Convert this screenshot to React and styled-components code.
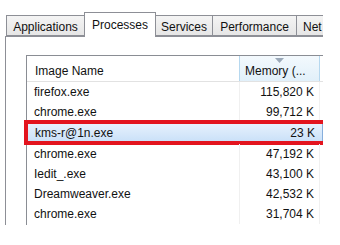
import React from 'react';
import styled, { createGlobalStyle } from 'styled-components';

const GlobalStyle = createGlobalStyle`
  body {
    margin: 0;
    background: #fff;
    font-family: "Liberation Sans", Arial, sans-serif;
    font-size: 12px;
    color: #111;
  }
`;

const Screen = styled.div`
  position: relative;
  width: 340px;
  height: 245px;
  overflow: hidden;
  background: #fff;
`;

const Clip = styled.div`
  width: 323px;
  height: 225px;
  overflow: hidden;
`;

const TabStrip = styled.div`
  display: flex;
  align-items: flex-end;
  height: 36px;
  padding-left: 7px;
  box-sizing: border-box;
`;

const Tab = styled.div`
  flex: none;
  display: flex;
  align-items: center;
  justify-content: ${(p) => (p.$cut ? 'flex-start' : 'center')};
  padding-left: ${(p) => (p.$cut ? 6 : 0)}px;
  box-sizing: border-box;
  width: ${(p) => p.$w}px;
  height: ${(p) => (p.$active ? 25 : 21)}px;
  margin-bottom: ${(p) => (p.$active ? -1 : 0)}px;
  border: 1px solid #8d8f96;
  border-bottom: ${(p) => (p.$active ? 'none' : '1px solid #8d8f96')};
  margin-left: -1px;
  background: ${(p) =>
    p.$active ? '#fff' : 'linear-gradient(#f4f4f4, #e6e6e6)'};
  padding-top: ${(p) => (p.$active ? 0 : 2)}px;
  white-space: nowrap;
  position: relative;
  z-index: ${(p) => (p.$active ? 2 : 1)};
`;

const Panel = styled.div`
  margin-left: 5px;
  border-left: 1px solid #8d8f96;
  border-top: 1px solid #8d8f96;
  height: 200px;
  padding: 18px 0 0 20px;
  box-sizing: border-box;
  background: #fff;
`;

const List = styled.div`
  border-left: 1px solid #8a8d94;
  border-top: 1px solid #8a8d94;
  height: 200px;
`;

const Header = styled.div`
  display: grid;
  grid-template-columns: 212px 81px 1fr;
  height: 25px;
  border-bottom: 1px solid #e2e2e2;
`;

const HeadCell = styled.div`
  position: relative;
  display: flex;
  align-items: center;
  padding: 4px 8px 0;
  box-sizing: border-box;
  ${(p) =>
    p.$sorted &&
    `
    background: linear-gradient(#f3f9fd, #e1f0fa);
    border-left: 1px solid #b6d8ef;
    border-right: 1px solid #b6d8ef;
    padding-left: 5px;
  `}
`;

const SortArrow = styled.svg`
  position: absolute;
  top: 2px;
  left: 35px;
`;

const Row = styled.div`
  position: relative;
  display: grid;
  grid-template-columns: 212px 81px 1fr;
  height: 20px;
  align-items: center;
  box-sizing: border-box;
  ${(p) =>
    p.$selected &&
    `
    height: 21px;
    margin-bottom: 1px;
    background: linear-gradient(#e8f2fd, #c9e0f8);
    border: 1px solid #86aedc;
    &::after {
      content: '';
      position: absolute;
      left: -4px;
      right: -8px;
      top: -3px;
      bottom: -3px;
      border: 4px solid #e3141e;
    }
  `}
`;

const NameCell = styled.div`
  padding-left: 7px;
  white-space: nowrap;
`;

const MemCell = styled.div`
  height: 100%;
  display: flex;
  align-items: center;
  justify-content: flex-end;
  padding-right: 5px;
  box-sizing: border-box;
  border-left: 1px solid ${(p) => (p.$selected ? 'transparent' : '#f0f0f0')};
  border-right: 1px solid ${(p) => (p.$selected ? 'transparent' : '#f0f0f0')};
`;

const tabs = [
  { label: 'Applications', w: 79 },
  { label: 'Processes', w: 72, active: true },
  { label: 'Services', w: 58 },
  { label: 'Performance', w: 85 },
  { label: 'Net', w: 40, cut: true },
];

const processes = [
  { name: 'firefox.exe', mem: '115,820 K' },
  { name: 'chrome.exe', mem: '99,712 K' },
  { name: 'kms-r@1n.exe', mem: '23 K', selected: true },
  { name: 'chrome.exe', mem: '47,192 K' },
  { name: 'Iedit_.exe', mem: '43,100 K' },
  { name: 'Dreamweaver.exe', mem: '42,532 K' },
  { name: 'chrome.exe', mem: '31,704 K' },
];

export default function App() {
  return (
    <Screen>
      <GlobalStyle />
      <Clip>
        <TabStrip>
          {tabs.map((t) => (
            <Tab key={t.label} $w={t.w} $active={t.active} $cut={t.cut}>
              {t.label}
            </Tab>
          ))}
        </TabStrip>
        <Panel>
          <List>
            <Header>
              <HeadCell>Image Name</HeadCell>
              <HeadCell $sorted>
                <SortArrow width="9" height="5" viewBox="0 0 9 5">
                  <path d="M0 0 H9 L4.5 5 Z" fill="#9aa8b8" />
                </SortArrow>
                Memory (...
              </HeadCell>
              <HeadCell />
            </Header>
            {processes.map((p, i) => (
              <Row key={i} $selected={p.selected}>
                <NameCell>{p.name}</NameCell>
                <MemCell $selected={p.selected}>{p.mem}</MemCell>
                <div />
              </Row>
            ))}
          </List>
        </Panel>
      </Clip>
    </Screen>
  );
}
